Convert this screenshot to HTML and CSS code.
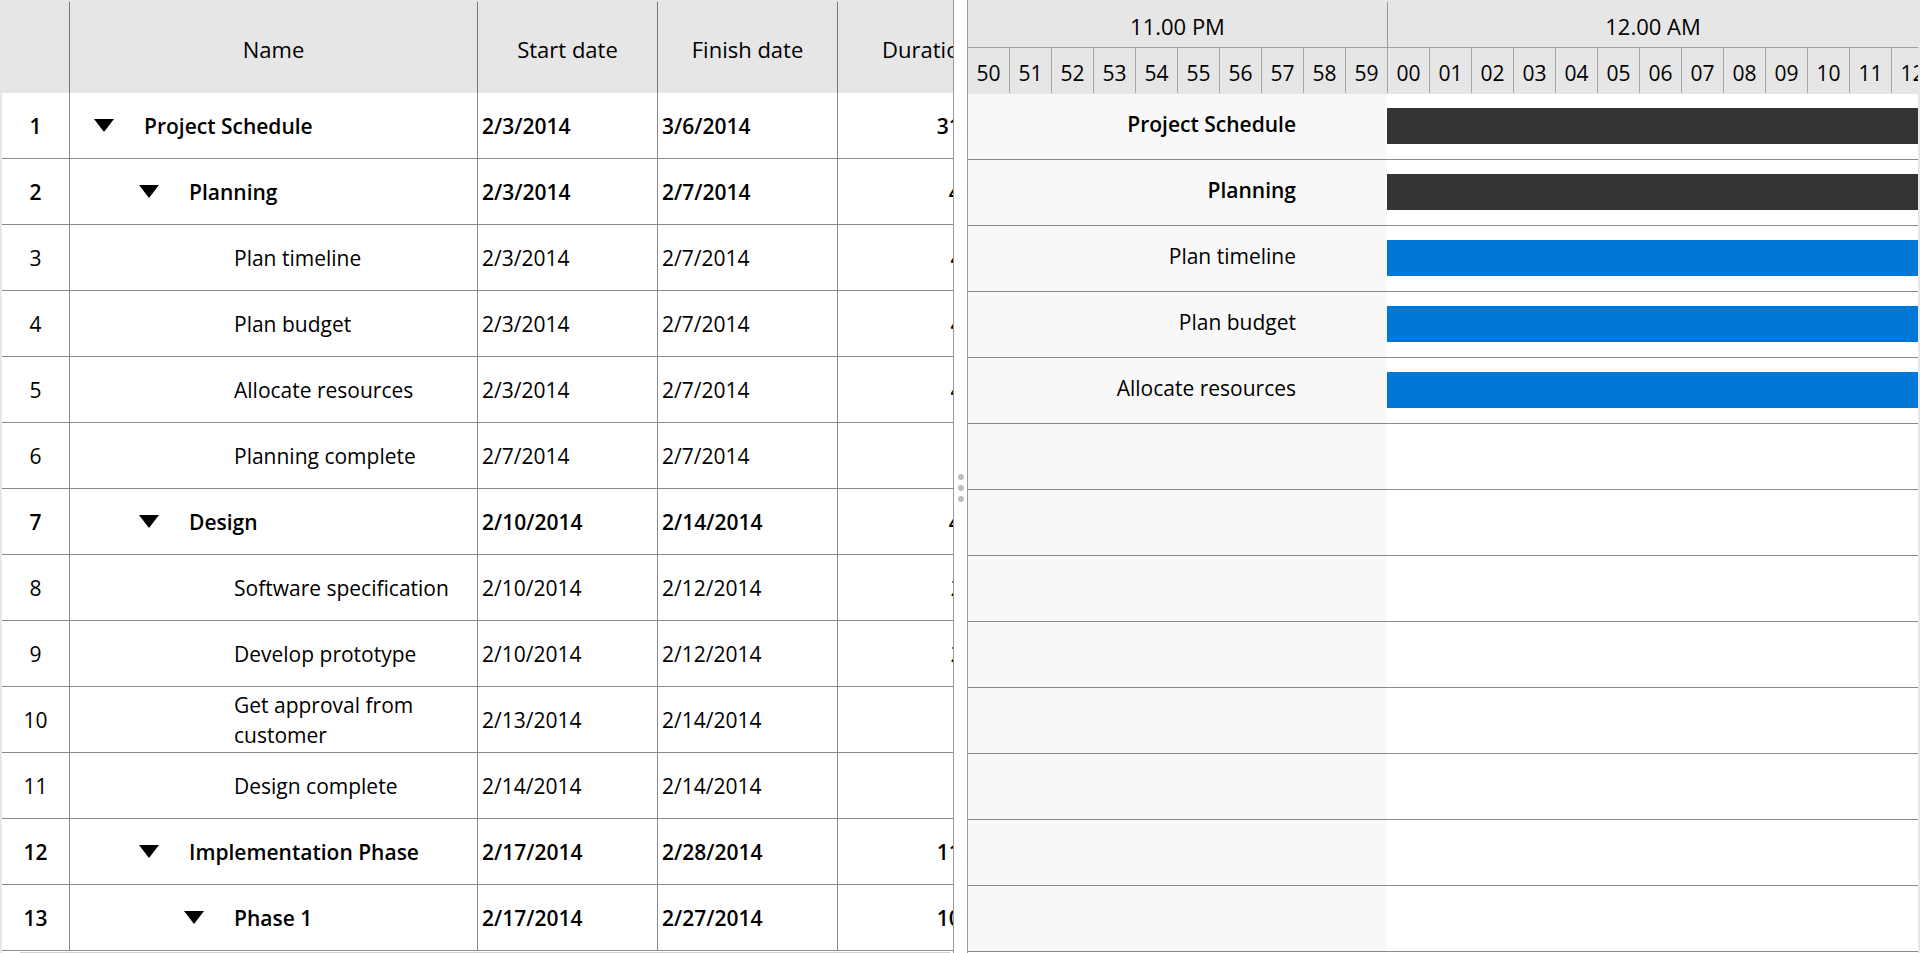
FILE: index.html
```html
<!DOCTYPE html>
<html lang="en">
<head>
    <meta charset="UTF-8">
    <meta name="viewport" content="width=device-width, initial-scale=1.0">
    <title>Project Gantt</title>
    <link rel="stylesheet" href="styles.css">
</head>
<body>

    <div class="gantt">

        <!-- Task grid -->
        <div class="grid-pane">
            <div class="grid-header">
                <div class="cell"></div>
                <div class="cell">Name</div>
                <div class="cell">Start date</div>
                <div class="cell">Finish date</div>
                <div class="cell">Duration</div>
            </div>
            <div id="gridBody"></div>
            <div class="hscroll"><div class="hscroll-thumb"></div></div>
        </div>

        <!-- Splitter -->
        <div class="splitter">
            <span class="grip"></span>
            <span class="grip"></span>
            <span class="grip"></span>
        </div>

        <!-- Chart -->
        <div class="chart-pane">
            <div class="chart-header">
                <div class="tier-top">
                    <div class="tcell first">11.00 PM</div>
                    <div class="tcell">12.00 AM</div>
                </div>
                <div class="tier-bottom" id="minuteTier"></div>
            </div>
            <div id="chartBody"></div>
        </div>

    </div>

    <script>
        const tasks = [
            { name: 'Project Schedule', level: 0, parent: true, start: '2/3/2014', finish: '3/6/2014', duration: '31 days', bar: 'summary' },
            { name: 'Planning', level: 1, parent: true, start: '2/3/2014', finish: '2/7/2014', duration: '4 days', bar: 'summary' },
            { name: 'Plan timeline', level: 2, start: '2/3/2014', finish: '2/7/2014', duration: '4 days', bar: 'task' },
            { name: 'Plan budget', level: 2, start: '2/3/2014', finish: '2/7/2014', duration: '4 days', bar: 'task' },
            { name: 'Allocate resources', level: 2, start: '2/3/2014', finish: '2/7/2014', duration: '4 days', bar: 'task' },
            { name: 'Planning complete', level: 2, start: '2/7/2014', finish: '2/7/2014', duration: '' },
            { name: 'Design', level: 1, parent: true, start: '2/10/2014', finish: '2/14/2014', duration: '4 days' },
            { name: 'Software specification', level: 2, start: '2/10/2014', finish: '2/12/2014', duration: '2 days' },
            { name: 'Develop prototype', level: 2, start: '2/10/2014', finish: '2/12/2014', duration: '2 days' },
            { name: 'Get approval from customer', level: 2, start: '2/13/2014', finish: '2/14/2014', duration: '' },
            { name: 'Design complete', level: 2, start: '2/14/2014', finish: '2/14/2014', duration: '' },
            { name: 'Implementation Phase', level: 1, parent: true, start: '2/17/2014', finish: '2/28/2014', duration: '11 days' },
            { name: 'Phase 1', level: 2, parent: true, start: '2/17/2014', finish: '2/27/2014', duration: '10 days' }
        ];

        const arrow = '<svg width="20" height="13" viewBox="0 0 20 13"><polygon points="0,0 20,0 10,13" fill="#000"/></svg>';

        const gridBody = document.getElementById('gridBody');
        const chartBody = document.getElementById('chartBody');

        tasks.forEach((task, i) => {
            const row = document.createElement('div');
            row.className = 'grid-row' + (task.parent ? ' parent' : '');
            row.innerHTML = `
                <div class="cell num">${i + 1}</div>
                <div class="cell name lvl-${task.level}">
                    <span class="toggle">${task.parent ? arrow : ''}</span>
                    <span class="name-text">${task.name}</span>
                </div>
                <div class="cell date">${task.start}</div>
                <div class="cell date">${task.finish}</div>
                <div class="cell dur">${task.duration}</div>
            `;
            gridBody.appendChild(row);

            // Only the first tasks reach into the visible time window
            const chartRow = document.createElement('div');
            chartRow.className = 'chart-row' + (task.parent ? ' parent' : '');
            chartRow.innerHTML = `
                <div class="bar-label">${task.bar ? task.name : ''}</div>
                <div class="bar-slot">${task.bar ? '<div class="bar ' + task.bar + '"></div>' : ''}</div>
            `;
            chartBody.appendChild(chartRow);
        });

        // Minute ticks from 11:50 PM to 12:12 AM
        const minuteTier = document.getElementById('minuteTier');
        for (let m = 50; m < 73; m++) {
            const cell = document.createElement('div');
            cell.className = 'mcell';
            cell.textContent = String(m % 60).padStart(2, '0');
            minuteTier.appendChild(cell);
        }
    </script>

</body>
</html>
```

FILE: styles.css
```css
body {
    font-family: 'Open Sans', 'Noto Sans', sans-serif;
    font-size: 21px;
    color: #000;
    background-color: #e6e6e6;
    margin: 0;
    padding: 0;
    overflow: hidden;
}

.gantt {
    display: flex;
    height: 953px;
    padding: 0 2px;
    box-sizing: border-box;
}

/* Grid */

.grid-pane {
    flex: none;
    width: 951px;
    overflow: hidden;
    background-color: #fff;
}

.grid-header,
.grid-row {
    display: grid;
    grid-template-columns: 68px 408px 180px 180px 180px;
}

.grid-header {
    height: 93px;
    padding-top: 2px;
    box-sizing: border-box;
    background-color: #e6e6e6;
    font-size: 22px;
}

.grid-header .cell {
    display: flex;
    align-items: center;
    justify-content: center;
    padding-top: 3px;
    border-right: 1px solid #777;
    white-space: nowrap;
}

.grid-row {
    height: 66px;
    border-bottom: 1px solid #8a8a8a;
    box-sizing: border-box;
}

.grid-row.parent {
    font-weight: 600;
}

.grid-row .cell {
    display: flex;
    align-items: center;
    border-right: 1px solid #8a8a8a;
    white-space: nowrap;
    overflow: hidden;
}

.grid-row .num {
    justify-content: center;
}

.grid-row .date {
    padding-left: 4px;
}

.grid-row .dur {
    justify-content: flex-end;
    padding-right: 4px;
}

.grid-row .name {
    padding-left: 24px;
    padding-right: 2px;
    white-space: normal;
}

.grid-row .lvl-1 {
    padding-left: 69px;
}

.grid-row .lvl-2 {
    padding-left: 114px;
}

.toggle {
    flex: none;
    width: 20px;
    height: 13px;
    margin-right: 30px;
    display: flex;
}

.name-text {
    line-height: 30px;
}

.hscroll {
    height: 2px;
    padding-left: 18px;
}

.hscroll-thumb {
    width: 930px;
    height: 1px;
    margin-top: 1px;
    background-color: #d0d0d0;
}

/* Splitter */

.splitter {
    flex: none;
    width: 15px;
    box-sizing: border-box;
    border-left: 1px solid #999;
    border-right: 1px solid #999;
    background-color: #fff;
    display: flex;
    flex-direction: column;
    align-items: center;
    gap: 5px;
    padding-top: 474px;
}

.grip {
    width: 6px;
    height: 6px;
    border-radius: 50%;
    background-color: #bdbdbd;
}

/* Chart */

.chart-pane {
    flex: none;
    width: 950px;
    overflow: hidden;
    background-color: #fff;
}

.chart-header {
    height: 94px;
    padding-top: 2px;
    box-sizing: border-box;
    background-color: #e6e6e6;
}

.tier-top {
    display: flex;
    height: 46px;
    box-sizing: border-box;
    border-bottom: 1px solid #a0a0a0;
}

.tcell {
    flex: 1;
    display: flex;
    align-items: center;
    justify-content: center;
    padding-top: 2px;
    font-size: 22px;
}

.tcell.first {
    flex: none;
    width: 420px;
    box-sizing: border-box;
    border-right: 1px solid #999;
}

.tier-bottom {
    display: flex;
    height: 45px;
}

.mcell {
    flex: none;
    width: 42px;
    box-sizing: border-box;
    border-right: 1px solid #a6a6a6;
    display: flex;
    align-items: center;
    justify-content: center;
    padding-top: 5px;
    font-size: 21px;
}

.chart-row {
    display: grid;
    grid-template-columns: 419px 1fr;
    height: 66px;
    box-sizing: border-box;
    border-bottom: 1px solid #8a8a8a;
}

.chart-row.parent {
    font-weight: 600;
}

.bar-label {
    background-color: #f8f8f8;
    display: flex;
    align-items: center;
    justify-content: flex-end;
    padding-right: 91px;
    padding-bottom: 6px;
    white-space: nowrap;
}

.bar-slot {
    padding-top: 14px;
}

.bar {
    height: 36px;
}

.bar.summary {
    background-color: #333;
}

.bar.task {
    background-color: #0078d7;
}
```
